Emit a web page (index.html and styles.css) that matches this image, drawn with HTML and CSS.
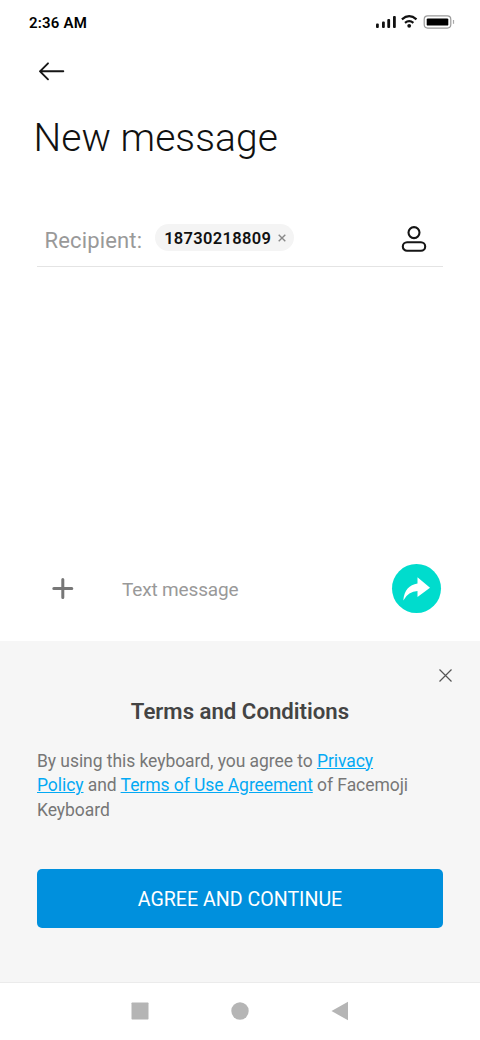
FILE: index.html
```html
<!DOCTYPE html>
<html lang="en">
<head>
<meta charset="utf-8">
<title>New message</title>
<link rel="stylesheet" href="styles.css">
</head>
<body>
<div class="screen">
  <div class="status">
    <span class="clock">2:36 AM</span>
    <svg class="status-icons" width="80" height="16" viewBox="0 0 80 16">
      <g fill="#111">
        <rect x="1" y="9.500" width="2.800" height="4.500" rx="1"/>
        <rect x="7" y="7.500" width="2.800" height="6.500" rx="1"/>
        <rect x="12.300" y="5" width="2.800" height="9" rx="1"/>
        <rect x="18" y="2" width="2.800" height="12" rx="1"/>
        <circle cx="34.200" cy="11.800" r="1.900"/>
      </g>
      <path d="M26.900 5.300Q34.200-.9 41.500 5.300M30 8.900Q34.200 5.500 38.400 8.900" fill="none" stroke="#111" stroke-width="2.200"/>
      <rect x="49.200" y="1.900" width="26.600" height="12.200" rx="3.500" fill="none" stroke="#999" stroke-width="1.200"/>
      <rect x="51.700" y="4.400" width="21.600" height="7.200" rx="1.200" fill="#000"/>
      <path d="M78.500 6v3.800" stroke="#aaa" stroke-width="1.200"/>
    </svg>
  </div>
  <header class="header">
    <svg width="27" height="20" viewBox="0 0 27 20" fill="none" stroke="#151515" stroke-width="1.900" stroke-linecap="round" stroke-linejoin="round"><path d="M25.300 10.300H2M10 2.300L2 10.300L10 18.300"/></svg>
  </header>
  <h1 class="title">New message</h1>
  <div class="recipient">
    <span class="recipient-label">Recipient:</span>
    <span class="chip"><span class="number">18730218809</span>
      <svg width="8" height="8" viewBox="0 0 8 8" stroke="#888" stroke-width="1.400"><path d="M.7.700l6.600 6.600M7.300.700L.7 7.300"/></svg>
    </span>
    <svg class="contact" width="26" height="28" viewBox="0 0 26 28" fill="none" stroke="#151515" stroke-width="2.100"><circle cx="13" cy="8.600" r="5.500"/><rect x="1.800" y="18.200" width="22.400" height="8.500" rx="4.250"/></svg>
  </div>
  <main class="thread"></main>
  <div class="composer">
    <svg width="22" height="22" viewBox="0 0 22 22" stroke="#777" stroke-width="3" stroke-linecap="round"><path d="M1.800 11.500h18M10.800 2.500v18"/></svg>
    <span class="placeholder">Text message</span>
    <span class="send"><svg width="49" height="49" viewBox="0 0 49 49"><path fill="#fff" d="M25.500 13.200L38 23.700L25.500 33v-5.900Q16.500 27.200 11.300 36.500C12.300 26 17.300 20.700 25.500 19.500Z"/></svg></span>
  </div>
  <section class="terms">
    <svg class="close" width="13" height="13" viewBox="0 0 13 13" stroke="#555" stroke-width="1.200"><path d="M.5.500l12 12M12.500.500L.5 12.500"/></svg>
    <h2 class="terms-title">Terms and Conditions</h2>
    <p class="terms-text">By using this keyboard, you agree to <a class="link">Privacy</a><br><a class="link">Policy</a> and <a class="link">Terms of Use Agreement</a> of Facemoji<br>Keyboard</p>
    <div class="agree"><span>AGREE AND CONTINUE</span></div>
  </section>
  <nav class="system-nav">
    <svg width="18" height="20" viewBox="0 0 18 20"><rect x=".5" y="1.500" width="17" height="17" rx=".7" fill="#b5b5b5"/></svg>
    <svg width="18" height="20" viewBox="0 0 18 20"><circle cx="9" cy="10" r="8.700" fill="#b5b5b5"/></svg>
    <svg width="18" height="20" viewBox="0 0 18 20"><path d="M.5 10L17 .7v18.600Z" fill="#b5b5b5"/></svg>
  </nav>
</div>
</body>
</html>
```
FILE: styles.css
```css
* { box-sizing: border-box; }
body { margin: 0; background: #fff; font-family: Roboto, sans-serif; }
svg { display: block; flex: none; }
.screen { width: 480px; height: 1040px; display: flex; flex-direction: column; overflow: hidden; white-space: nowrap; }
.status { height: 44px; padding: 0 25px 0 29px; display: flex; align-items: center; justify-content: space-between; flex: none; }
.clock { padding-top: 1px; font-size: 15px; font-weight: 600; color: #000; letter-spacing: .2px; }
.header { height: 56px; padding: 17px 0 0 38px; flex: none; }
.title { margin: 0; height: 76px; padding-left: 33.500px; font-size: 39px; line-height: 76px; font-weight: 300; color: #111; letter-spacing: .05px; flex: none; }
.recipient { height: 57px; margin: 34px 37px 0; padding: 0 16px 0 7.500px; border-bottom: 1px solid #e4e4e4; display: flex; align-items: center; flex: none; }
.recipient-label { font-size: 22px; color: #999; padding-top: 4px; letter-spacing: .15px; }
.chip { height: 27px; margin: -1px 0 0 13px; padding: 0 8px 0 9px; border-radius: 14px; background: #f4f4f4; display: flex; align-items: center; gap: 7px; }
.number { padding-top: 2px; font-size: 16.500px; font-weight: 600; color: #111; letter-spacing: .3px; }
.contact { margin-left: auto; }
.thread { flex: 1; }
.composer { height: 78px; margin-bottom: 14px; padding: 0 39px 0 52px; display: flex; align-items: center; flex: none; }
.placeholder { margin-left: 48px; padding-top: 2px; font-size: 19px; color: #999; letter-spacing: -.15px; }
.send { width: 49px; height: 49px; margin-left: auto; border-radius: 50%; background: #00dccd; }
.terms { height: 341px; padding: 28px 37px 0; background: #f6f6f6; display: flex; flex-direction: column; flex: none; }
.close { margin: 0 -9px 0 auto; }
.terms-title { margin: 14px 0 0; font-size: 22.200px; line-height: 30px; font-weight: 600; color: #444; text-align: center; }
.terms-text { margin: 22.500px 0 0; font-size: 17.500px; line-height: 24.500px; color: #777; letter-spacing: -.06px; }
.link { color: #03a9f4; text-decoration: underline; }
.agree { height: 59px; margin-top: 46.500px; border-radius: 5px; background: #0090dd; color: #fff; font-size: 19.600px; display: flex; align-items: center; justify-content: center; }
.agree span { padding-top: 2px; }
.system-nav { height: 58px; padding-bottom: 1px; border-top: 1px solid #ebebeb; display: flex; align-items: center; justify-content: center; gap: 82px; flex: none; }
```
